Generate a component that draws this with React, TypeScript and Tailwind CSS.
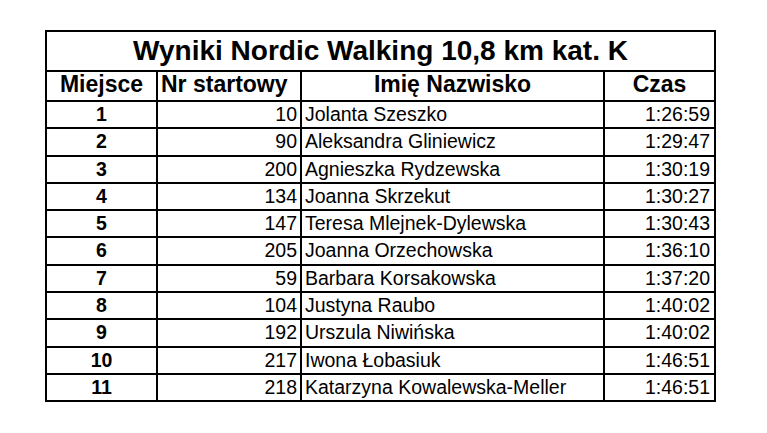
const rows = [
  { place: 1, nr: 10, name: 'Jolanta Szeszko', time: '1:26:59' },
  { place: 2, nr: 90, name: 'Aleksandra Gliniewicz', time: '1:29:47' },
  { place: 3, nr: 200, name: 'Agnieszka Rydzewska', time: '1:30:19' },
  { place: 4, nr: 134, name: 'Joanna Skrzekut', time: '1:30:27' },
  { place: 5, nr: 147, name: 'Teresa Mlejnek-Dylewska', time: '1:30:43' },
  { place: 6, nr: 205, name: 'Joanna Orzechowska', time: '1:36:10' },
  { place: 7, nr: 59, name: 'Barbara Korsakowska', time: '1:37:20' },
  { place: 8, nr: 104, name: 'Justyna Raubo', time: '1:40:02' },
  { place: 9, nr: 192, name: 'Urszula Niwińska', time: '1:40:02' },
  { place: 10, nr: 217, name: 'Iwona Łobasiuk', time: '1:46:51' },
  { place: 11, nr: 218, name: 'Katarzyna Kowalewska-Meller', time: '1:46:51' },
];

// row heights so the lines land on whole pixels (27/28 px pitch)
const rowHeights = ['h-[25px]', 'h-[26px]', 'h-[25px]', 'h-[25px]', 'h-[25px]', 'h-[26px]', 'h-[25px]', 'h-[25px]', 'h-[26px]', 'h-[25px]', 'h-[25px]'];

const cols = 'grid grid-cols-[109px_2px_142px_2px_301px_2px_109px]';

function Line() {
  return <div className="bg-black" />;
}

export default function App() {
  return (
    <div className="w-[767px] h-[433px] bg-white overflow-hidden pt-[30px] pl-[45px] font-['Liberation_Sans',Arial,sans-serif] text-black">
      <div className="w-[671px] border-2 border-black">
        <div className="h-[38px] flex items-center justify-center text-[28px] font-bold leading-none">
          Wyniki Nordic Walking 10,8 km kat. K
        </div>

        <div className={`${cols} h-[30px] border-t-2 border-black text-[23px] font-bold leading-none`}>
          <div className="flex items-center justify-center pb-[3px]">Miejsce</div>
          <Line />
          <div className="flex items-center pl-[3px] pb-[3px]">Nr startowy</div>
          <Line />
          <div className="flex items-center justify-center pb-[3px]">Imię Nazwisko</div>
          <Line />
          <div className="flex items-center justify-center pb-[3px]">Czas</div>
        </div>

        {rows.map((r, i) => (
          <div key={r.place} className={`${cols} ${rowHeights[i]} box-content border-t-2 border-black text-[19.5px] leading-none`}>
            <div className="flex items-center justify-center font-bold">{r.place}</div>
            <Line />
            <div className="flex items-center justify-end pr-[3px]">{r.nr}</div>
            <Line />
            <div className="flex items-center pl-[3px] whitespace-nowrap">{r.name}</div>
            <Line />
            <div className="flex items-center justify-end pr-[4px]">{r.time}</div>
          </div>
        ))}
      </div>
    </div>
  );
}
